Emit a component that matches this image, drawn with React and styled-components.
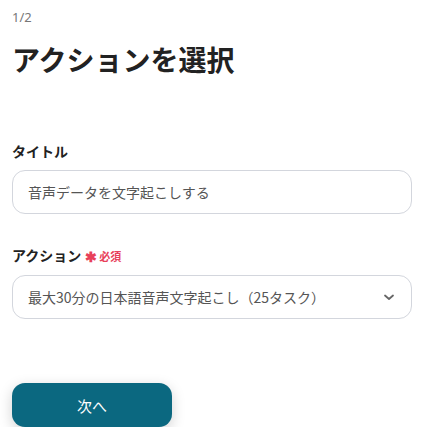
import React from "react";
import styled, { createGlobalStyle } from "styled-components";

const Global = createGlobalStyle`
  html, body { margin: 0; padding: 0; background: #fff; }
  body { font-family: "Noto Sans CJK JP", "Noto Sans", sans-serif; color: #222; }
`;

const Page = styled.div`
  padding: 8px 15px 0 12px;
  display: flex;
  flex-direction: column;
`;

const Step = styled.div`
  font-size: 13px;
  line-height: 18px;
  color: #777;
  font-family: "Noto Sans", "Noto Sans CJK JP", sans-serif;
`;

const Title = styled.h1`
  margin: 13px 0 0;
  font-size: 28px;
  line-height: 40px;
  font-weight: 700;
  color: #222;
  letter-spacing: 0;
`;

const Field = styled.div`
  display: flex;
  flex-direction: column;
  gap: 9px;
  margin-top: ${(p) => p.$mt}px;
`;

const Label = styled.div`
  display: flex;
  align-items: center;
  gap: 4px;
  font-size: 14px;
  line-height: 20px;
  font-weight: 700;
  color: #222;
`;

const Required = styled.span`
  display: flex;
  align-items: center;
  gap: 2px;
  color: #e8415a;
  font-size: 11px;
  font-weight: 700;
  padding-top: 2px;
`;

const Star = styled.span`
  font-size: 14px;
  line-height: 1;
`;

const Box = styled.div`
  box-sizing: border-box;
  height: 44px;
  border: 1px solid #d3d6dd;
  border-radius: 13px;
  display: flex;
  align-items: center;
  justify-content: space-between;
  padding: 0 16px 0 15px;
  font-size: 14px;
  color: #555;
  background: #fff;
`;

const Chevron = styled.svg`
  width: 12px;
  height: 12px;
  color: #666;
`;

const Button = styled.button`
  margin-top: 64px;
  width: 160px;
  height: 44px;
  border: none;
  border-radius: 13px;
  background: #0b6880;
  color: #fff;
  font-family: "Noto Sans CJK JP", sans-serif;
  font-size: 15px;
  box-shadow: 0 4px 14px rgba(0, 0, 0, 0.18);
  cursor: pointer;
`;

export default function App() {
  return (
    <>
      <Global />
      <Page>
        <Step>1/2</Step>
        <Title>アクションを選択</Title>
        <Field $mt={62}>
          <Label>タイトル</Label>
          <Box>音声データを文字起こしする</Box>
        </Field>
        <Field $mt={30}>
          <Label>
            アクション
            <Required>
              <Star>✱</Star>必須
            </Required>
          </Label>
          <Box>
            最大30分の日本語音声文字起こし（25タスク）
            <Chevron viewBox="0 0 12 12" fill="none">
              <path d="M2 4.5 L6 8 L10 4.5" stroke="currentColor" strokeWidth="1.8" strokeLinecap="round" strokeLinejoin="round" />
            </Chevron>
          </Box>
        </Field>
        <Button>次へ</Button>
      </Page>
    </>
  );
}
